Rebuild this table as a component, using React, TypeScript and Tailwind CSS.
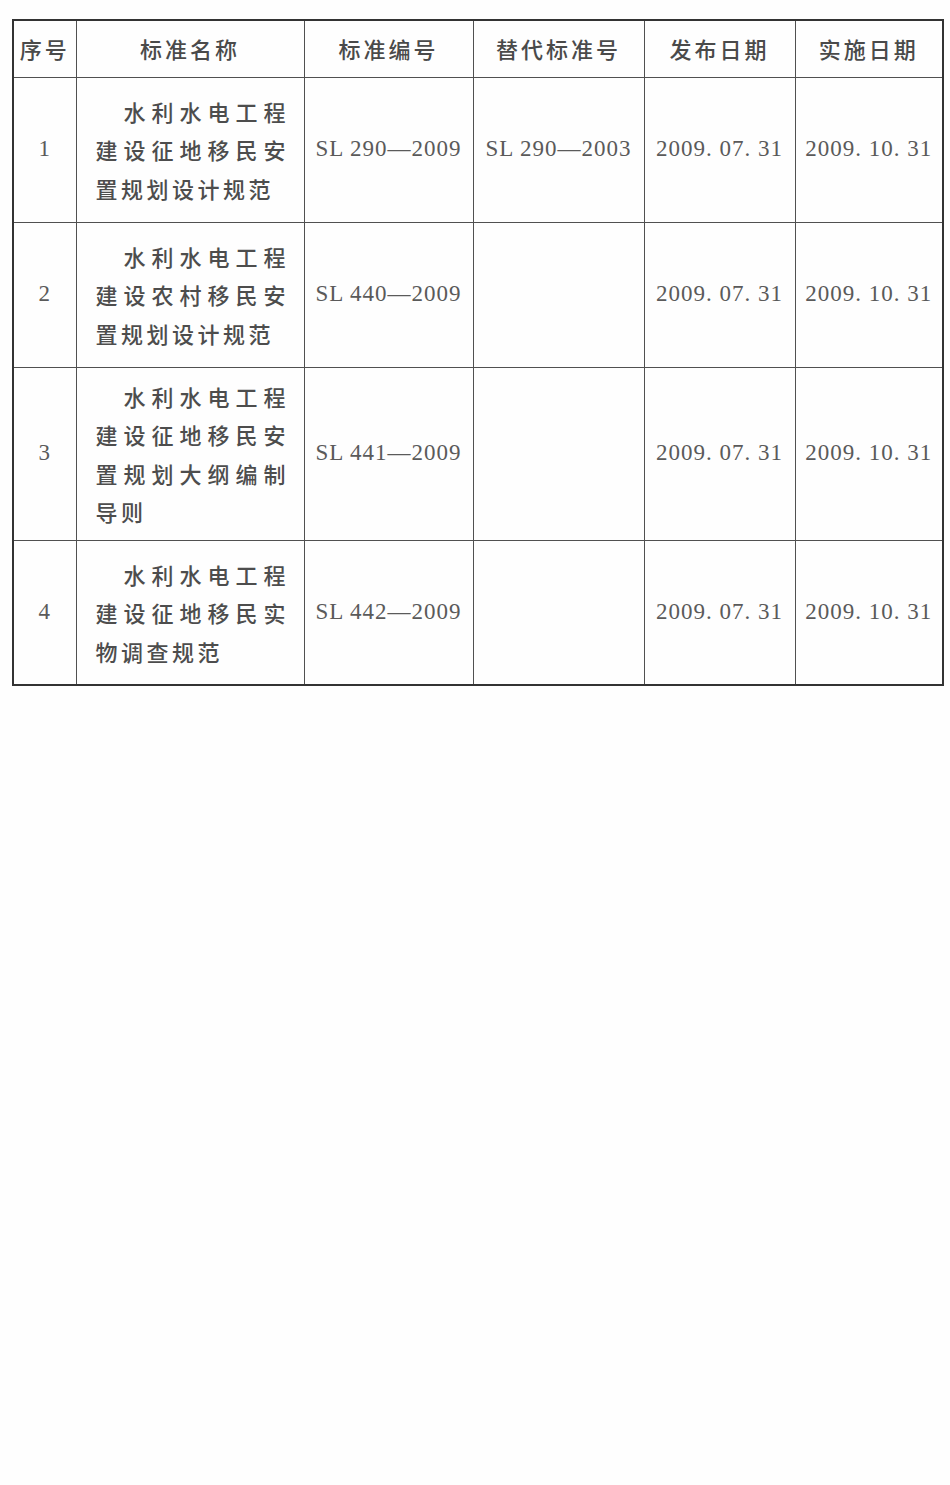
type Row = {
  no: string
  name: { text: string; full: boolean }[]
  code: string
  replaced: string
  issued: string
  effective: string
  h: string
}

const rows: Row[] = [
  {
    no: "1",
    name: [
      { text: "水利水电工程", full: true },
      { text: "建设征地移民安", full: true },
      { text: "置规划设计规范", full: false },
    ],
    code: "SL 290—2009",
    replaced: "SL 290—2003",
    issued: "2009. 07. 31",
    effective: "2009. 10. 31",
    h: "h-[145px]",
  },
  {
    no: "2",
    name: [
      { text: "水利水电工程", full: true },
      { text: "建设农村移民安", full: true },
      { text: "置规划设计规范", full: false },
    ],
    code: "SL 440—2009",
    replaced: "",
    issued: "2009. 07. 31",
    effective: "2009. 10. 31",
    h: "h-[145px]",
  },
  {
    no: "3",
    name: [
      { text: "水利水电工程", full: true },
      { text: "建设征地移民安", full: true },
      { text: "置规划大纲编制", full: true },
      { text: "导则", full: false },
    ],
    code: "SL 441—2009",
    replaced: "",
    issued: "2009. 07. 31",
    effective: "2009. 10. 31",
    h: "h-[173px]",
  },
  {
    no: "4",
    name: [
      { text: "水利水电工程", full: true },
      { text: "建设征地移民实", full: true },
      { text: "物调查规范", full: false },
    ],
    code: "SL 442—2009",
    replaced: "",
    issued: "2009. 07. 31",
    effective: "2009. 10. 31",
    h: "h-[145px]",
  },
]

const cjk = "font-['Noto_Sans_CJK_SC',sans-serif]"
const num = "font-['Liberation_Serif','Noto_Sans_CJK_SC',serif] text-[23px] tracking-[1px] text-[#5a5a5a] text-center whitespace-nowrap"
const cell = "border border-[#505050] p-0 align-middle"

export default function App() {
  return (
    <div className="min-h-screen w-full bg-[#fefefe] pl-[12px] pt-[19px]">
      <table className="table-fixed border-collapse border-2 border-[#333]">
        <colgroup>
          <col className="w-[63px]" />
          <col className="w-[228px]" />
          <col className="w-[169px]" />
          <col className="w-[171px]" />
          <col className="w-[151px]" />
          <col className="w-[148px]" />
        </colgroup>
        <thead>
          <tr className={`h-[57px] ${cjk} text-[22px] tracking-[3px] text-[#4a4a4a] font-medium`}>
            <th className={`${cell} text-center font-medium`}>序号</th>
            <th className={`${cell} text-center font-medium`}>标准名称</th>
            <th className={`${cell} text-center font-medium`}>标准编号</th>
            <th className={`${cell} text-center font-medium`}>替代标准号</th>
            <th className={`${cell} text-center font-medium`}>发布日期</th>
            <th className={`${cell} text-center font-medium`}>实施日期</th>
          </tr>
        </thead>
        <tbody>
          {rows.map((r) => (
            <tr key={r.no} className={r.h}>
              <td className={`${cell} ${num}`}>{r.no}</td>
              <td className={`${cell} pl-[19px]`}>
                <div className={`${cjk} text-[22px] leading-[38.5px] text-[#4d4d4d] font-medium`}>
                  {r.name.map((l, i) => (
                    <div
                      key={i}
                      className={`whitespace-nowrap ${i === 0 ? "pl-[28px]" : ""} ${l.full ? "tracking-[6px]" : "tracking-[3.5px]"}`}
                    >
                      {l.text}
                    </div>
                  ))}
                </div>
              </td>
              <td className={`${cell} ${num}`}>{r.code}</td>
              <td className={`${cell} ${num}`}>{r.replaced}</td>
              <td className={`${cell} ${num}`}>{r.issued}</td>
              <td className={`${cell} ${num}`}>{r.effective}</td>
            </tr>
          ))}
        </tbody>
      </table>
    </div>
  )
}
